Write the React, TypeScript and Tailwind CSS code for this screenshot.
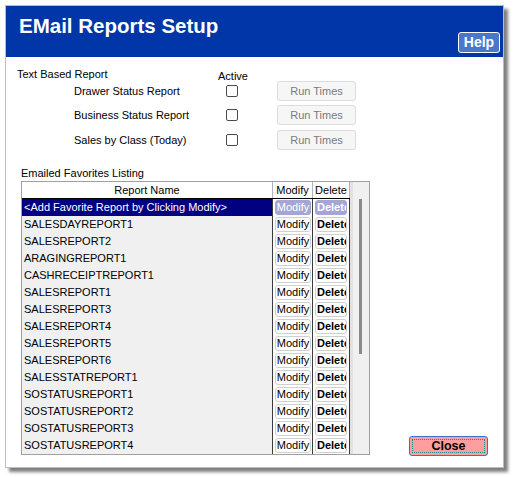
const reports = [
  "SALESDAYREPORT1",
  "SALESREPORT2",
  "ARAGINGREPORT1",
  "CASHRECEIPTREPORT1",
  "SALESREPORT1",
  "SALESREPORT3",
  "SALESREPORT4",
  "SALESREPORT5",
  "SALESREPORT6",
  "SALESSTATREPORT1",
  "SOSTATUSREPORT1",
  "SOSTATUSREPORT2",
  "SOSTATUSREPORT3",
  "SOSTATUSREPORT4",
];

const textReports = [
  { name: "Drawer Status Report", mt: "mt-0" },
  { name: "Business Status Report", mt: "mt-[4px]" },
  { name: "Sales by Class (Today)", mt: "mt-[5px]" },
];

const ReportRow = ({ name, selected }: { name: string; selected?: boolean }) => (
  <div className="flex h-[17px]">
    <div
      className={
        selected
          ? "w-[250px] pl-[2px] bg-[#000080] text-white leading-[17px] whitespace-nowrap"
          : "w-[250px] pl-[2px] bg-[#f0f0f0] text-black leading-[17px] whitespace-nowrap"
      }
    >
      {name}
    </div>
    <div className="w-[1px] bg-[#3c3c3c]" />
    <div className="w-[39px] bg-white flex items-center pl-[2px]">
      <button
        className={
          selected
            ? "w-[36px] h-[15px] rounded-[3px] border border-[#a6a6d6] bg-[#a6a6d6] text-white leading-[13px] text-center"
            : "w-[36px] h-[15px] rounded-[3px] border border-[#cfcfcf] bg-white text-black leading-[13px] text-center"
        }
      >
        Modify
      </button>
    </div>
    <div className="w-[1px] bg-[#3c3c3c]" />
    <div className="w-[36px] bg-white flex items-center pl-[2px]">
      <button
        className={
          selected
            ? "w-[32px] h-[15px] rounded-[3px] border border-[#a6a6d6] bg-[#a6a6d6] text-white font-bold leading-[13px] text-left pl-[1px] overflow-hidden whitespace-nowrap"
            : "w-[32px] h-[15px] rounded-[3px] border border-[#cfcfcf] bg-white text-black font-bold leading-[13px] text-left pl-[1px] overflow-hidden whitespace-nowrap"
        }
      >
        Delete
      </button>
    </div>
    <div className="w-[1px] bg-[#3c3c3c]" />
  </div>
);

const App = () => {
  return (
    <div
      className="w-[515px] h-[477px] bg-white pt-[5px] pl-[5px] text-[11px] text-black"
      style={{ fontFamily: '"Liberation Sans", Arial, sans-serif' }}
    >
      <div className="w-[499px] h-[463px] border border-[#bdbdbd] bg-white shadow-[4px_4px_3px_rgba(0,0,0,0.5)] flex flex-col">
        {/* title bar */}
        <div className="h-[51px] bg-[#0036a8] flex justify-between">
          <h1 className="pl-[13px] pt-[8px] text-[20.5px] leading-[24px] font-bold text-white">
            EMail Reports Setup
          </h1>
          <button className="self-end mb-[4px] mr-[3px] w-[42px] h-[21px] rounded-[3px] border-[1.5px] border-white bg-[#4a77cc] text-white font-bold text-[14px] leading-[17px]">
            Help
          </button>
        </div>

        <div className="pl-[11px] pt-[10px]">
          {/* text based reports */}
          <div className="flex h-[14px] leading-[14px]">
            <span className="w-[201px]">Text Based Report</span>
            <span className="mt-[2px]">Active</span>
          </div>
          {textReports.map((r) => (
            <div key={r.name} className={`flex items-center h-[20px] ${r.mt}`}>
              <span className="ml-[57px] w-[152px]">{r.name}</span>
              <span className="w-[12px] h-[12px] rounded-[2px] border border-[#4a4a4a] bg-white" />
              <button className="ml-[39px] w-[79px] h-[20px] rounded-[3px] border border-[#dcdcdc] bg-[#f6f6f6] text-[#7a7a7a]">
                Run Times
              </button>
            </div>
          ))}

          {/* favorites listing */}
          <div className="ml-[4px] mt-[16px] h-[14px] leading-[14px]">Emailed Favorites Listing</div>
          <div className="ml-[4px] mt-[1px] flex items-end">
            <div className="w-[349px] border border-[#a0a0a0] flex">
              <div>
                <div className="flex h-[17px] bg-white border-b border-black">
                  <div className="w-[250px] text-center leading-[16px]">Report Name</div>
                  <div className="w-[1px] bg-[#b4b4b4]" />
                  <div className="w-[39px] text-center leading-[16px]">Modify</div>
                  <div className="w-[1px] bg-[#b4b4b4]" />
                  <div className="w-[36px] text-center leading-[16px] whitespace-nowrap">Delete</div>
                  <div className="w-[1px] bg-[#b4b4b4]" />
                </div>
                <ReportRow name="<Add Favorite Report by Clicking Modify>" selected />
                {reports.map((r) => (
                  <ReportRow key={r} name={r} />
                ))}
              </div>
              <div className="w-[3px] bg-[#e2e2e2]" />
              <div className="w-[16px] bg-[#f0f0f0] pt-[17px] pl-[6px]">
                <div className="w-[3px] h-[155px] bg-[#8a8a8a]" />
              </div>
            </div>
            <button className="ml-[39px] mb-[-1px] w-[79px] h-[20px] rounded-[3px] border border-[#3f6fd0] bg-[#ff9e9e] p-[2px]">
              <span className="block h-full border border-dotted border-[#2a8a8a] font-bold text-[12.5px] leading-[12px]">
                Close
              </span>
            </button>
          </div>
        </div>
      </div>
    </div>
  );
};

export default App;
